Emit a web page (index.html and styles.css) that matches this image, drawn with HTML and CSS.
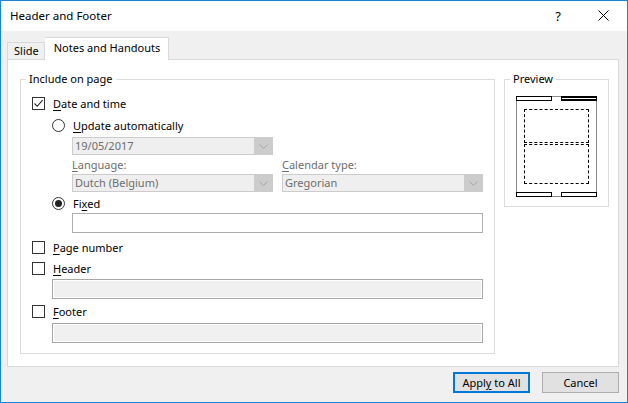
FILE: index.html
```html
<!DOCTYPE html>
<html>
<head>
    <title>Header and Footer</title>
    <meta name="viewport" content="width=device-width,initial-scale=1">
    <link rel="stylesheet" href="styles.css">
</head>
<body>
<div class="window">
    <!-- 제목 표시줄 -->
    <div class="titlebar">
        <span class="title">Header and Footer</span>
        <span class="help">?</span>
        <svg class="close" width="11" height="11" viewBox="0 0 11 11">
            <path d="M0.5 0.5 L10.5 10.5 M10.5 0.5 L0.5 10.5" stroke="#000" stroke-width="1"/>
        </svg>
    </div>

    <div class="content">
        <!-- 탭 -->
        <div class="tabs">
            <div class="tab">Slide</div>
            <div class="tab active">Notes and Handouts</div>
        </div>

        <div class="panel">
            <div class="group main">
                <span class="legend">Include on page</span>

                <div class="row r-date">
                    <span class="check on">
                        <svg width="11" height="11" viewBox="0 0 11 11"><path d="M1.5 5.5 L4.2 8.3 L9.6 2.2" fill="none" stroke="#222" stroke-width="1.1"/></svg>
                    </span>
                    <span class="lbl"><u>D</u>ate and time</span>
                </div>

                <div class="sub">
                    <div class="row r-auto">
                        <span class="radio"></span>
                        <span class="lbl"><u>U</u>pdate automatically</span>
                    </div>

                    <div class="indent">
                        <div class="combo w200 c-date">
                            <span class="val">19/05/2017</span>
                            <span class="drop"><svg width="9" height="5" viewBox="0 0 9 5"><path d="M0.5 0.5 L4.5 4.5 L8.5 0.5" fill="none" stroke="#a6a6a6"/></svg></span>
                        </div>

                        <div class="pair">
                            <div class="field">
                                <div class="cap"><u>L</u>anguage:</div>
                                <div class="combo w200">
                                    <span class="val">Dutch (Belgium)</span>
                                    <span class="drop"><svg width="9" height="5" viewBox="0 0 9 5"><path d="M0.5 0.5 L4.5 4.5 L8.5 0.5" fill="none" stroke="#a6a6a6"/></svg></span>
                                </div>
                            </div>
                            <div class="field">
                                <div class="cap"><u>C</u>alendar type:</div>
                                <div class="combo w200">
                                    <span class="val">Gregorian</span>
                                    <span class="drop"><svg width="9" height="5" viewBox="0 0 9 5"><path d="M0.5 0.5 L4.5 4.5 L8.5 0.5" fill="none" stroke="#a6a6a6"/></svg></span>
                                </div>
                            </div>
                        </div>
                    </div>

                    <div class="row r-fixed">
                        <span class="radio on"></span>
                        <span class="lbl">Fi<u>x</u>ed</span>
                    </div>
                    <div class="indent">
                        <div class="input fixed-input"></div>
                    </div>
                </div>

                <div class="row r-page">
                    <span class="check"></span>
                    <span class="lbl"><u>P</u>age number</span>
                </div>

                <div class="row r-header">
                    <span class="check"></span>
                    <span class="lbl"><u>H</u>eader</span>
                </div>
                <div class="sub">
                    <div class="input off i-header"></div>
                </div>

                <div class="row r-footer">
                    <span class="check"></span>
                    <span class="lbl"><u>F</u>ooter</span>
                </div>
                <div class="sub">
                    <div class="input off i-footer"></div>
                </div>
            </div>

            <div class="group preview">
                <span class="legend">Preview</span>
                <div class="page">
                    <span class="bar tl"></span>
                    <span class="bar tr"></span>
                    <span class="dash d1"></span>
                    <span class="dash d2"></span>
                    <span class="bar bl"></span>
                    <span class="bar br"></span>
                </div>
            </div>
        </div>

        <!-- 하단 버튼 -->
        <div class="buttons">
            <div class="btn default"><span>Appl<u>y</u> to All</span></div>
            <div class="btn"><span>Cancel</span></div>
        </div>
    </div>
</div>
</body>
</html>
```

FILE: styles.css
```css
/* 대화 상자 전체 */
body {
    margin: 0;
    font-family: "Noto Sans", "Open Sans", sans-serif;
    font-size: 11px;
    color: #000;
}

u {
    text-decoration: underline;
    text-underline-offset: 2px;
}

.window {
    width: 628px;
    height: 403px;
    box-sizing: border-box;
    border: 1px solid #1883d7;
    background: #f0f0f0;
}

.titlebar {
    height: 30px;
    background: #fff;
    display: flex;
    align-items: center;
}

.title {
    margin-left: 9px;
    font-size: 11.5px;
    margin-top: -1px;
}

.help {
    margin-left: auto;
    font-size: 13px;
    margin-right: 37px;
    margin-top: -1px;
}

.close {
    margin-right: 18px;
    margin-top: -1px;
}

.content {
    padding: 0 8px 0 6px;
}

/* 탭 */
.tabs {
    display: flex;
    align-items: flex-end;
    height: 28px;
    position: relative;
    z-index: 1;
}

.tab {
    height: 16px;
    line-height: 16px;
    padding: 0 5px 0 6px;
    border: 1px solid #d9d9d9;
    border-bottom: none;
    background: #f0f0f0;
}

.tab.active {
    height: 22px;
    line-height: 20px;
    padding: 0 8px 0 9px;
    background: #fff;
    border-left: none;
    margin-bottom: -1px;
}

.panel {
    background: #fff;
    border: 1px solid #d9d9d9;
    display: flex;
    align-items: flex-start;
    padding: 19px 0 0 12px;
    box-sizing: border-box;
    height: 308px;
}

/* 그룹 상자 */
.group {
    border: 1px solid #dcdcdc;
    position: relative;
    box-sizing: border-box;
}

.legend {
    position: absolute;
    top: -9px;
    left: 5px;
    padding: 0 3px;
    background: #fff;
    line-height: 16px;
}

.main {
    width: 475px;
    height: 275px;
    padding: 17px 0 0 11px;
}

.preview {
    width: 105px;
    height: 128px;
    margin-left: 9px;
    padding: 16px 0 0 11px;
}

.row {
    display: flex;
    align-items: center;
    height: 13px;
}

.lbl {
    margin-left: 8px;
    line-height: 13px;
}

.check {
    width: 13px;
    height: 13px;
    box-sizing: border-box;
    border: 1px solid #333;
    background: #fff;
    display: flex;
    align-items: center;
    justify-content: center;
}

.radio {
    width: 13px;
    height: 13px;
    box-sizing: border-box;
    border: 1px solid #333;
    border-radius: 50%;
    background: #fff;
    display: flex;
    align-items: center;
    justify-content: center;
}

.radio.on::after {
    content: "";
    width: 7px;
    height: 7px;
    border-radius: 50%;
    background: #222;
}

.sub {
    padding-left: 20px;
}

.indent {
    padding-left: 20px;
}

.r-auto {
    margin-top: 9px;
}

/* 콤보 상자 */
.combo {
    height: 18px;
    box-sizing: border-box;
    border: 1px solid #cccccc;
    background: #efefef;
    display: flex;
    align-items: center;
    color: #6d6d6d;
}

.w200 {
    width: 201px;
}

.c-date {
    margin-top: 5px;
}

.val {
    flex: 1;
    padding-left: 2px;
    line-height: 16px;
}

.drop {
    width: 18px;
    height: 16px;
    background: #cccccc;
    display: flex;
    align-items: center;
    justify-content: center;
}

.pair {
    display: flex;
    gap: 9px;
    margin-top: 2px;
}

.cap {
    color: #6d6d6d;
    line-height: 16px;
    height: 16px;
    margin-bottom: 1px;
}

.r-fixed {
    margin-top: 5px;
}

.input {
    height: 20px;
    box-sizing: border-box;
    border: 1px solid #adadad;
    background: #fff;
    width: 411px;
}

.fixed-input {
    margin-top: 3px;
}

.input.off {
    width: 431px;
    background: #f0f0f0;
    box-shadow: inset 0 0 0 1px #fff;
    border-color: #a8a8a8;
}

.r-page {
    margin-top: 8px;
}

.r-header {
    margin-top: 8px;
}

.i-header {
    margin-top: 4px;
}

.r-footer {
    margin-top: 6px;
}

.i-footer {
    margin-top: 5px;
}

/* 미리보기 그림 */
.page {
    position: relative;
    width: 81px;
    height: 101px;
    box-sizing: border-box;
    border: 1px solid #8a8a8a;
}

.bar {
    position: absolute;
    width: 36px;
    height: 5px;
    box-sizing: border-box;
    border: 1px solid #000;
    background: #fff;
}

.tl { left: -1px; top: -1px; }
.tr { right: -1px; top: -1px; border-top-width: 2px; border-bottom-width: 2px; }
.bl { left: -1px; bottom: -1px; }
.br { right: -1px; bottom: -1px; }

.dash {
    position: absolute;
    left: 7px;
    width: 65px;
    box-sizing: border-box;
    border: 1px dashed #000;
}

.d1 { top: 12px; height: 34px; }
.d2 { top: 47px; height: 40px; }

/* 버튼 */
.buttons {
    display: flex;
    justify-content: flex-end;
    gap: 12px;
    margin-top: 5px;
}

.btn {
    width: 77px;
    height: 21px;
    box-sizing: border-box;
    border: 1px solid #adadad;
    background: #e1e1e1;
    display: flex;
    align-items: center;
    justify-content: center;
}

.btn.default {
    border: 2px solid #0078d7;
}
```
